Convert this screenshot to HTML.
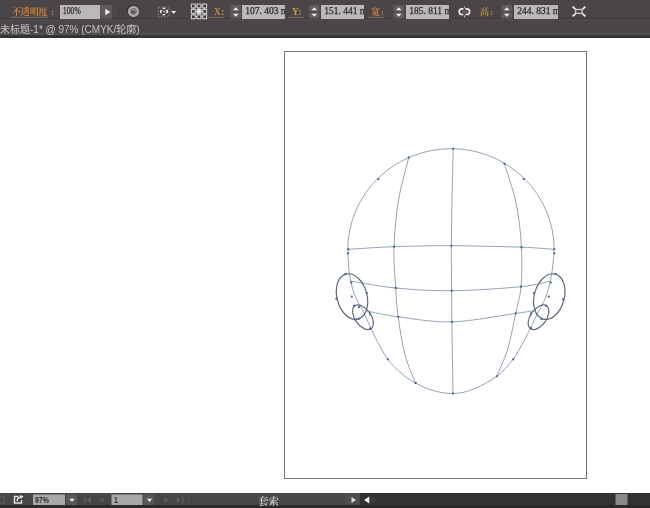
<!DOCTYPE html>
<html lang="zh-CN">
<head>
<meta charset="utf-8">
<title>未标题-1</title>
<style>
html,body{margin:0;padding:0;}
body{width:650px;height:508px;overflow:hidden;background:#fff;position:relative;font-family:"Liberation Sans","Noto Sans CJK SC",sans-serif;}
.abs{position:absolute;}
div.abs{will-change:transform;}
#ctrl{left:0;top:0;width:650px;height:18px;background:#4a4549;}
#sep1{left:0;top:18px;width:650px;height:1px;background:#3e3a3d;}
#sep2{left:0;top:19px;width:650px;height:2px;background:#4e494d;}
#tab{left:0;top:21px;width:650px;height:12px;background:#4a4549;}
#sep3{left:0;top:33px;width:650px;height:2px;background:#524e51;}
#sep4{left:0;top:35px;width:650px;height:3px;background:linear-gradient(#3c393c,#2e2c2f);}
#status{left:0;top:492.6px;width:650px;height:15.4px;background:#484548;}
#artboard{left:283.7px;top:51.2px;width:303px;height:427.7px;border:1px solid #747474;box-sizing:border-box;background:#fff;}
.lbl{color:#cd853a;font-size:9px;line-height:12px;white-space:nowrap;font-weight:700;font-family:"Liberation Serif","Noto Serif CJK SC",serif;}
.d{margin-right:2.4px;}
.lat{font-size:9.5px;letter-spacing:0.3px;}
.inp{background:#bbb8bb;height:14px;top:4.7px;color:#2c2a2c;font-family:"Liberation Serif","Noto Serif CJK SC",serif;font-size:9.5px;line-height:13px;white-space:nowrap;overflow:hidden;box-sizing:border-box;padding-left:3.2px;-webkit-text-stroke:0.25px #2c2a2c;}
.spin{background:#5d595c;width:10px;height:13px;top:5px;}
.stxt{font-size:9px;line-height:11px;white-space:nowrap;}
.tabtxt{left:0;top:22.5px;color:#c6c4c6;font-size:10px;line-height:14px;white-space:nowrap;}
</style>
</head>
<body>
<div class="abs" id="ctrl"></div>
<div class="abs" id="sep1"></div>
<div class="abs" id="sep2"></div>
<div class="abs" id="tab"></div>
<div class="abs" id="sep3"></div>
<div class="abs" id="sep4"></div>

<!--ICONS-->
<svg class="abs" style="left:0;top:0" width="650" height="21" viewBox="0 0 650 21">
<!-- play button -->
<rect x="100.5" y="5" width="11.5" height="13.5" fill="#5e5a5e"/>
<path d="M105.3 8.8v6.4l5-3.2z" fill="#f0eef0"/>
<!-- separators -->
<rect x="119" y="3" width="1" height="15" fill="#454044"/>
<rect x="149" y="3" width="1" height="15" fill="#454044"/>
<!-- globe -->
<circle cx="133" cy="10.9" r="6.2" fill="#353235"/>
<circle cx="133.5" cy="11.4" r="5.5" fill="#b4b2b4"/>
<circle cx="133.5" cy="11.4" r="3.4" fill="#777477"/>
<path d="M132 9.2c1.6-.8 3.2 0 3.6 1.4c-1 .3-1.2 1.4-2.2 1.6c-.8-.6-1.8-1.4-1.400-3z" fill="#9a989a"/>
<circle cx="133.2" cy="11.800" r="1.400" fill="#454245"/>
<!-- dotted square -->
<rect x="158.4" y="7" width="10.6" height="9.8" fill="none" stroke="#807d80" stroke-width="1.200" stroke-dasharray="1.500 1.500"/>
<g fill="#e6e4e6">
<rect x="162.5" y="7.600" width="2.800" height="1.500"/>
<rect x="160" y="10" width="1.600" height="3.200"/>
<rect x="166.200" y="9.800" width="1.800" height="3.400"/>
<rect x="162.500" y="14" width="2.600" height="1.400"/>
<path d="M162.200 10.200l3.400 3.200M165.600 10.200l-1.500 1.500" stroke="#bdbbbd" stroke-width="1" fill="none"/>
</g>
<path d="M171 10.900h5.300l-2.650 2.900z" fill="#f0eef0"/>
<!-- ref point grid -->
<g stroke="#d2d0d2" stroke-width="1.1" fill="#3a373a">
<path d="M193.2 6h11.4M193.2 11.5h11.4M193.2 16.8h11.4M193.2 6v10.800M199 6v10.800M204.600 6v10.800" fill="none" stroke-width="1.2"/>
<rect x="191.4" y="4.1" width="3.8" height="3.8"/><rect x="197.1" y="4.1" width="3.8" height="3.8"/><rect x="202.8" y="4.1" width="3.8" height="3.8"/><rect x="191.4" y="9.5" width="3.8" height="3.8"/><rect x="197.1" y="9.5" width="3.8" height="3.8" fill="#ffffff"/><rect x="202.8" y="9.5" width="3.8" height="3.8"/><rect x="191.4" y="14.9" width="3.8" height="3.8"/><rect x="197.1" y="14.9" width="3.8" height="3.8"/><rect x="202.8" y="14.9" width="3.8" height="3.8"/>
</g>
<rect x="230.5" y="5" width="10.5" height="13.5" fill="#5e5a5e"/><rect x="230.5" y="11.5" width="10.5" height="1" fill="#4a4549"/><path d="M233 10.3h5.6l-2.8-3z M233 13.7h5.6l-2.8 3z" fill="#eeeced"/><rect x="309" y="5" width="10.5" height="13.5" fill="#5e5a5e"/><rect x="309" y="11.5" width="10.5" height="1" fill="#4a4549"/><path d="M311.5 10.3h5.6l-2.8-3z M311.5 13.7h5.6l-2.8 3z" fill="#eeeced"/><rect x="393.5" y="5" width="10.5" height="13.5" fill="#5e5a5e"/><rect x="393.5" y="11.5" width="10.5" height="1" fill="#4a4549"/><path d="M396 10.3h5.6l-2.8-3z M396 13.7h5.6l-2.8 3z" fill="#eeeced"/><rect x="501.5" y="5" width="10.5" height="13.5" fill="#5e5a5e"/><rect x="501.5" y="11.5" width="10.5" height="1" fill="#4a4549"/><path d="M504 10.3h5.6l-2.8-3z M504 13.7h5.6l-2.8 3z" fill="#eeeced"/>
<!-- underlines -->
<g fill="#78685a">
<rect x="11" y="16.800" width="37" height="1.3"/>
<rect x="208" y="16.800" width="16" height="1.3"/>
<rect x="288" y="16.800" width="16" height="1.3"/>
<rect x="368" y="16.800" width="16" height="1.3"/>

</g>
<!-- link icon -->
<g fill="none" stroke="#efedef" stroke-width="1.7">
<path d="M463.4 8.900h-1.400a2.800 2.800 0 0 0 0 5.600h1.400"/>
<path d="M465.400 8.900h1.400a2.800 2.800 0 0 1 0 5.600h-1.400"/>
</g>
<path d="M462 11.700h4.800" fill="none" stroke="#7a777a" stroke-width="1.200"/>
<g fill="#c9c7c9"><rect x="464" y="6.300" width="1" height="1.500"/><rect x="464" y="15.600" width="1" height="1.800"/></g>
<!-- transform icon -->
<rect x="575.6" y="9.5" width="6.6" height="3.9" fill="none" stroke="#cdcbcd" stroke-width="1.3"/>
<path d="M572.6 6.700l2.800 2.400 M585.400 6.700l-2.800 2.400 M572.600 16.300l2.800-2.400 M585.400 16.300l-2.800-2.400" fill="none" stroke="#f4f2f4" stroke-width="1.700"/>
</svg>
<!--/ICONS-->
<div class="abs lbl" style="left:12.3px;top:5.5px;letter-spacing:-0.15px;">不透明度</div>
<div class="abs lbl" style="left:50.5px;top:5.5px;">:</div>
<div class="abs inp" style="left:60.2px;width:40.3px;"><span style="display:inline-block;transform:scaleX(0.8);transform-origin:0 50%;">100%</span></div>
<div class="abs lbl lat" style="left:213.8px;top:5.5px;">X:</div>
<div class="abs inp" style="left:242.2px;width:43.3px;">107<span class="d">.</span>403 mm</div>
<div class="abs lbl lat" style="left:291.5px;top:5.5px;color:#c9a045;">Y:</div>
<div class="abs inp" style="left:320.8px;width:42.9px;">151<span class="d">.</span>441 mm</div>
<div class="abs lbl" style="left:370.5px;top:5.5px;">宽<span style="margin-left:1px">:</span></div>
<div class="abs inp" style="left:405.8px;width:43.4px;">185<span class="d">.</span>811 mm</div>
<div class="abs lbl" style="left:479.8px;top:5.5px;color:#b58a42;">高<span style="margin-left:1px">:</span></div>
<div class="abs inp" style="left:514.4px;width:43.6px;">244<span class="d">.</span>831 mm</div>

<div class="abs tabtxt">未标题-1* @ 97% (CMYK/轮廓)</div>

<div class="abs" id="artboard"></div>
<!--DRAW-->
<svg class="abs" style="left:0;top:0" width="650" height="508" viewBox="0 0 650 508">
<g fill="none" stroke="#96a4b7" stroke-width="1">
<path d="M347.8 249.5 A103.2 100.8 0 0 1 554.2 249.5"/>
<path d="M347.8 249.5 C347.9 251.6 347.8 256.8 348.3 262.0 C348.8 267.2 349.3 275.0 350.6 281.0 C351.9 287.0 353.8 292.7 356.0 298.0 C358.2 303.3 360.8 306.5 364.0 313.0 C367.2 319.5 371.0 329.3 375.0 337.0 C379.0 344.7 383.5 353.2 387.8 359.2 C392.1 365.2 396.4 369.0 401.0 373.0 C405.6 377.0 410.3 380.1 415.6 383.0 C420.9 385.9 426.8 388.8 433.0 390.5 C439.2 392.2 446.3 393.7 453.0 393.5 C459.7 393.3 465.7 392.2 473.0 389.3 C480.3 386.4 490.1 381.3 496.8 376.3 C503.5 371.3 508.3 365.8 513.2 359.2 C518.1 352.6 521.9 344.7 526.0 337.0 C530.1 329.3 534.5 319.5 537.8 313.0 C541.0 306.5 543.4 303.3 545.5 298.0 C547.6 292.7 549.1 287.0 550.4 281.0 C551.7 275.0 552.6 267.2 553.2 262.0 C553.8 256.8 554.0 251.6 554.2 249.5"/>
<path d="M348.2 249.3 C355.8 248.9 376.8 247.3 394.0 246.7 C411.2 246.1 430.2 245.6 451.4 245.7 C472.6 245.8 504.3 246.6 521.4 247.2 C538.5 247.8 548.7 249.0 554.2 249.3"/>
<path d="M350.6 281.0 C358.1 282.2 378.9 286.4 395.7 288.0 C412.5 289.6 430.8 290.9 451.7 290.7 C472.6 290.5 504.6 288.3 521.0 286.7 C537.5 285.1 545.5 281.9 550.4 281.0"/>
<path d="M367.0 311.0 C372.2 312.0 384.1 315.0 398.2 316.8 C412.3 318.6 432.3 322.5 451.9 321.9 C471.5 321.3 501.8 315.3 515.7 313.4 C529.6 311.5 532.2 311.0 535.5 310.5"/>
<path d="M453.2 148.7 C453.0 157.2 452.3 183.8 452.0 200.0 C451.7 216.2 451.5 230.6 451.4 245.7 C451.3 260.8 451.5 278.0 451.6 290.7 C451.7 303.4 451.7 304.8 451.9 321.9 C452.1 339.0 452.8 381.6 453.0 393.5"/>
<path d="M408.8 157.4 C407.1 164.5 401.0 185.1 398.5 200.0 C396.0 214.9 394.5 232.0 394.0 246.7 C393.5 261.4 395.0 276.3 395.7 288.0 C396.4 299.7 396.6 305.6 398.2 316.8 C399.8 328.0 402.1 344.0 405.0 355.0 C407.9 366.0 413.8 378.3 415.6 383.0"/>
<path d="M504.5 163.8 C506.5 170.7 513.7 191.1 516.5 205.0 C519.3 218.9 520.6 233.6 521.4 247.2 C522.1 260.8 522.0 275.7 521.0 286.7 C520.0 297.7 517.9 303.2 515.7 313.4 C513.5 323.6 511.1 337.5 508.0 348.0 C504.9 358.5 498.7 371.6 496.8 376.3"/>
</g>
<g fill="none" stroke="#656a7b" stroke-width="1.2">
<ellipse cx="352" cy="296.6" rx="15" ry="23.3" transform="rotate(-15 352 296.6)"/>
<ellipse cx="363" cy="317.3" rx="8" ry="14" transform="rotate(-35 363 317.3)"/>
<ellipse cx="549.3" cy="296.6" rx="15" ry="23.3" transform="rotate(15 549.3 296.6)"/>
<ellipse cx="538.5" cy="317.3" rx="8" ry="14" transform="rotate(35 538.5 317.3)"/>
</g>
<g fill="#4a68a0">
<rect x="452.2" y="147.7" width="2" height="2"/>
<rect x="407.8" y="156.4" width="2" height="2"/>
<rect x="377.4" y="178.1" width="2" height="2"/>
<rect x="503.5" y="162.8" width="2" height="2"/>
<rect x="522.7" y="178.1" width="2" height="2"/>
<rect x="347.2" y="248.3" width="2" height="2"/>
<rect x="347.0" y="252.4" width="2" height="2"/>
<rect x="553.2" y="248.3" width="2" height="2"/>
<rect x="553.3" y="252.3" width="2" height="2"/>
<rect x="393.0" y="245.7" width="2" height="2"/>
<rect x="450.4" y="244.7" width="2" height="2"/>
<rect x="520.4" y="246.2" width="2" height="2"/>
<rect x="394.7" y="287.0" width="2" height="2"/>
<rect x="450.7" y="289.7" width="2" height="2"/>
<rect x="520.0" y="285.7" width="2" height="2"/>
<rect x="397.2" y="315.8" width="2" height="2"/>
<rect x="450.9" y="320.9" width="2" height="2"/>
<rect x="514.7" y="312.4" width="2" height="2"/>
<rect x="386.8" y="358.2" width="2" height="2"/>
<rect x="414.6" y="382.0" width="2" height="2"/>
<rect x="452.0" y="392.5" width="2" height="2"/>
<rect x="495.8" y="375.3" width="2" height="2"/>
<rect x="512.2" y="358.2" width="2" height="2"/>
<rect x="344.5" y="272.9" width="2" height="2"/>
<rect x="335.4" y="297.6" width="2" height="2"/>
<rect x="365.8" y="292.1" width="2" height="2"/>
<rect x="350.3" y="281.5" width="2" height="2"/>
<rect x="350.8" y="295.6" width="2" height="2"/>
<rect x="353.2" y="304.7" width="2" height="2"/>
<rect x="357.9" y="306.0" width="2" height="2"/>
<rect x="369.0" y="312.6" width="2" height="2"/>
<rect x="354.7" y="318.6" width="2" height="2"/>
<rect x="357.9" y="317.7" width="2" height="2"/>
<rect x="369.0" y="327.6" width="2" height="2"/>
<rect x="554.5" y="272.9" width="2" height="2"/>
<rect x="549.7" y="281.5" width="2" height="2"/>
<rect x="532.9" y="292.1" width="2" height="2"/>
<rect x="547.8" y="295.6" width="2" height="2"/>
<rect x="562.0" y="298.4" width="2" height="2"/>
<rect x="545.3" y="304.7" width="2" height="2"/>
<rect x="530.0" y="312.6" width="2" height="2"/>
<rect x="540.6" y="318.1" width="2" height="2"/>
<rect x="530.0" y="327.1" width="2" height="2"/>
</g>
</svg>
<!--/DRAW-->
<div class="abs" id="status"></div>
<div class="abs" style="left:360px;top:492.6px;width:290px;height:15.4px;background:#343134;"></div>
<div class="abs" style="left:0;top:505px;width:650px;height:3px;background:#2b292b;"></div>
<svg class="abs" style="left:0;top:490px" width="650" height="18" viewBox="0 490 650 18">
<!-- dim left icon -->
<path d="M0 497h4v6h-4" fill="none" stroke="#5c595c" stroke-width="1.2"/>
<!-- export icon -->
<path d="M18.5 496.5h-4v6.5h7v-3" fill="none" stroke="#e4e2e4" stroke-width="1.4"/>
<path d="M17 501c0.5-2.5 2-3.8 4-4" fill="none" stroke="#e4e2e4" stroke-width="1.5"/>
<path d="M19.5 495l4 1.2-2.6 2.8z" fill="#e4e2e4"/>
<!-- zoom input -->
<rect x="33" y="494.5" width="32" height="10.5" fill="#a9a7a9"/>
<rect x="66" y="494.5" width="11" height="10.5" fill="#5a575a"/>
<path d="M69.5 498.8h5l-2.5 3.2z" fill="#f2f2f2"/>
<!-- nav first/prev -->
<g fill="#5e5c5e">
<rect x="84" y="497" width="1.5" height="6"/><path d="M91 497v6l-4.5-3z"/>
<path d="M103.5 497v6l-4-3z"/>
</g>
<!-- page input -->
<rect x="111.5" y="494.5" width="31" height="10.5" fill="#a9a7a9"/>
<rect x="143.7" y="494.5" width="10.5" height="10.5" fill="#5a575a"/>
<path d="M147 498.8h5l-2.5 3.2z" fill="#f2f2f2"/>
<g fill="#5e5c5e">
<path d="M164.5 497v6l4-3z"/>
<path d="M176.5 497v6l4.5-3z"/><rect x="182" y="497" width="1.5" height="6"/>
<rect x="188" y="495" width="1" height="10" fill="#555255"/>
</g>
<!-- status arrow -->
<rect x="345" y="494" width="14" height="11" fill="#4f4c4f"/>
<path d="M351.5 497v6l4.5-3z" fill="#dddbdd"/>
<path d="M369.3 496.5v7l-5.2-3.5z" fill="#f0eef0"/>
<path d="M371 497.5h3l2 2.5-2 2.5h-3z" fill="#3f3c3f"/>
<!-- scroll thumb -->
<rect x="615.5" y="494" width="12" height="11" fill="#8b898b"/>
</svg>
<div class="abs stxt" style="left:34.7px;top:495.1px;color:#2c2a2c;font-weight:bold;transform:scaleX(0.77);transform-origin:0 50%;">97%</div>
<div class="abs stxt" style="left:113.5px;top:495.1px;color:#2c2a2c;font-weight:bold;transform:scaleX(0.77);transform-origin:0 50%;">1</div>
<div class="abs stxt" style="left:258px;top:495.6px;font-size:10.5px;color:#cfcdcf;font-family:'Liberation Serif','Noto Serif CJK SC',serif;font-weight:600;">套索</div>
</body>
</html>
